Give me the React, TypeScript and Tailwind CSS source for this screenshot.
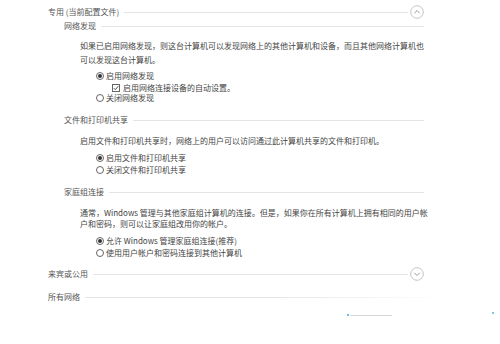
import { ReactNode } from 'react';

const FONT = { fontFamily: '"Noto Sans CJK SC", "Noto Sans", sans-serif' };

const CircleChevron = ({ up }: { up: boolean }) => (
    <svg width="14" height="14" viewBox="0 0 14 14" className="shrink-0">
        <circle cx="7" cy="7" r="6.3" fill="white" stroke="#c4c4c4" strokeWidth="1" />
        <path
            d={up ? 'M4.3 8.2 L7 5.5 L9.7 8.2' : 'M4.3 5.8 L7 8.5 L9.7 5.8'}
            fill="none"
            stroke="#9a9a9a"
            strokeWidth="1"
        />
    </svg>
);

// Header row with a thin rule running to the right edge
const Header = ({ label, chevron, className = '' }: { label: string; chevron?: 'up' | 'down'; className?: string }) => (
    <div className={`flex items-center h-[12px] ${className}`}>
        <span className="text-[8px] leading-none text-[#555] whitespace-nowrap">{label}</span>
        <div className="flex-1 h-px bg-[#e4e4e4] ml-[5px]"></div>
        {chevron && (
            <div className="ml-[2px]">
                <CircleChevron up={chevron === 'up'} />
            </div>
        )}
    </div>
);

const Radio = ({ checked, children, className = '' }: { checked?: boolean; children: ReactNode; className?: string }) => (
    <div className={`flex items-center h-[12px] pl-[96px] ${className}`}>
        <span className="w-[8px] h-[8px] rounded-full border border-[#666] flex items-center justify-center bg-white">
            {checked && <span className="w-[4px] h-[4px] rounded-full bg-[#333]"></span>}
        </span>
        <span className="ml-[2px] text-[8px] leading-none text-[#444] whitespace-nowrap">{children}</span>
    </div>
);

export default function App() {
    return (
        <div className="relative w-[500px] h-[344px] bg-white overflow-hidden" style={FONT}>
            <div className="flex flex-col pl-[48px] pr-[76px] pt-[6px]">
                <Header label="专用 (当前配置文件)" chevron="up" />

                <div className="flex flex-col pl-[16px]">
                    <Header label="网络发现" className="mt-[2px]" />
                </div>

                <p className="mt-[7px] pl-[32px] text-[8px] leading-[14px] text-[#444]">
                    如果已启用网络发现，则这台计算机可以发现网络上的其他计算机和设备，而且其他网络计算机也
                    <br />
                    可以发现这台计算机。
                </p>

                <div className="flex flex-col -ml-[48px] mt-[3px]">
                    <Radio checked>启用网络发现</Radio>
                    <div className="flex items-center h-[11px] pl-[112px]">
                        <span className="w-[8px] h-[8px] border border-[#666] flex items-center justify-center bg-white">
                            <svg width="6" height="6" viewBox="0 0 6 6">
                                <path d="M0.8 3.2 L2.3 4.7 L5.3 1.2" fill="none" stroke="#333" strokeWidth="0.9" />
                            </svg>
                        </span>
                        <span className="ml-[3px] text-[8px] leading-none text-[#444] whitespace-nowrap">启用网络连接设备的自动设置。</span>
                    </div>
                    <Radio className="-mt-px">关闭网络发现</Radio>
                </div>

                <div className="pl-[16px] mt-[10px]">
                    <Header label="文件和打印机共享" />
                </div>

                <p className="mt-[9px] pl-[32px] text-[8px] leading-[12px] text-[#444] whitespace-nowrap">
                    启用文件和打印机共享时，网络上的用户可以访问通过此计算机共享的文件和打印机。
                </p>

                <div className="flex flex-col -ml-[48px] mt-[5px]">
                    <Radio checked>启用文件和打印机共享</Radio>
                    <Radio>关闭文件和打印机共享</Radio>
                </div>

                <div className="pl-[16px] mt-[10px]">
                    <Header label="家庭组连接" />
                </div>

                <p className="mt-[9px] pl-[32px] text-[8px] leading-[11px] text-[#444] whitespace-nowrap">
                    通常，Windows 管理与其他家庭组计算机的连接。但是，如果你在所有计算机上拥有相同的用户帐
                    <br />
                    户和密码，则可以让家庭组改用你的帐户。
                </p>

                <div className="flex flex-col -ml-[48px] mt-[6px]">
                    <Radio checked>允许 Windows 管理家庭组连接(推荐)</Radio>
                    <Radio>使用用户帐户和密码连接到其他计算机</Radio>
                </div>

                <Header label="来宾或公用" chevron="down" className="mt-[9px]" />

                <div className="flex items-center h-[12px] mt-[11px] mr-[-20px]">
                    <span className="text-[8px] leading-none text-[#555] whitespace-nowrap">所有网络</span>
                    <div className="flex-1 h-px ml-[5px] bg-linear-to-r from-[#e4e4e4] via-[#e4e4e4] to-transparent"></div>
                </div>
            </div>

            {/* faint marks at the bottom right */}
            <div className="absolute left-[347px] top-[314px] w-[2px] h-[2px] rounded-full bg-[#3aa0e0]"></div>
            <div className="absolute left-[350px] top-[315px] w-[42px] h-px bg-[#d8d8d8]"></div>
            <div className="absolute left-[492px] top-[312px] w-[2px] h-[2px] rounded-full bg-[#5ab0e6]"></div>
        </div>
    );
}
